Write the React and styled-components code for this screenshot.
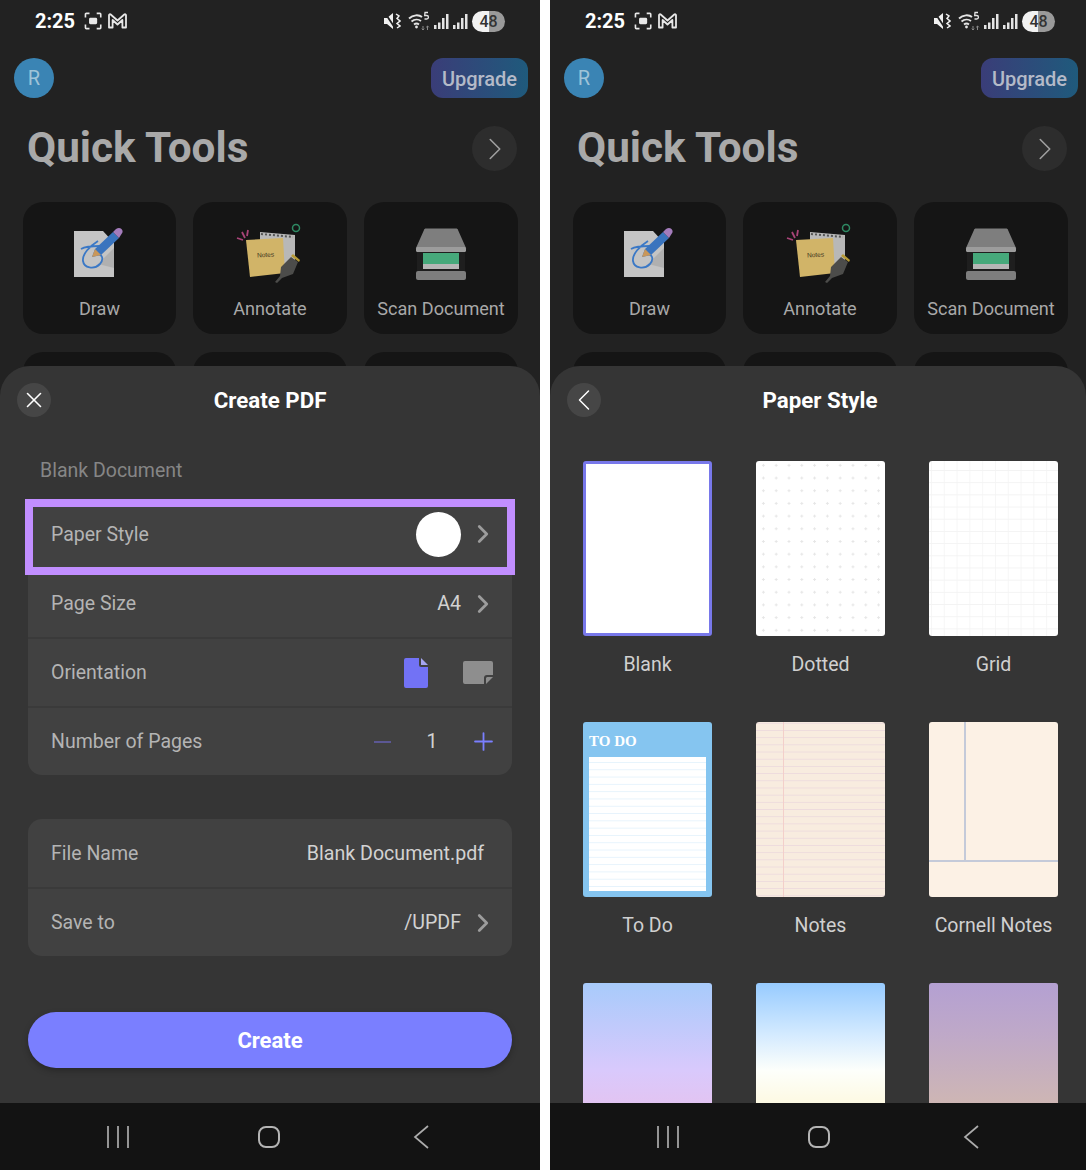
import React from 'react'
import styled, { createGlobalStyle } from 'styled-components'
import { ChevronLeft, ChevronRight, Plus, X } from 'lucide-react'

const GlobalStyle = createGlobalStyle`
    html, body {
        margin: 0;
        padding: 0;
        background: #ffffff;
    }
    * {
        box-sizing: border-box;
    }
`

const Page = styled.div`
    display: flex;
    gap: 10px;
    width: 1086px;
    height: 1170px;
    overflow: hidden;
    font-family: Roboto, "Liberation Sans", sans-serif;
`

const Phone = styled.div`
    display: flex;
    flex-direction: column;
    flex: none;
    width: ${p => p.$width}px;
    height: 1170px;
    overflow: hidden;
    background: #222222;
`

const Content = styled.div`
    position: relative;
    flex: none;
    width: 100%;
    height: 1103px;
    overflow: hidden;
`

const StatusBar = styled.div`
    display: flex;
    align-items: center;
    justify-content: space-between;
    width: 540px;
    height: 42px;
    padding: 0 35px;
`

const StatusGroup = styled.div`
    display: flex;
    align-items: center;
    gap: ${p => p.$gap || 5}px;
`

const Time = styled.span`
    margin-right: 5px;
    color: #ffffff;
    font-size: 20px;
    font-weight: 700;
`

const MuteIcon = styled.svg`
    margin-right: 3px;
`

const Battery = styled.div`
    width: 33px;
    height: 21px;
    border-radius: 11px;
    background: linear-gradient(90deg, #f2f2f2 50%, #9a9a9a 50%);
    color: #333333;
    font-size: 16px;
    font-weight: 500;
    line-height: 21px;
    text-align: center;
`

const TopBar = styled.div`
    display: flex;
    align-items: center;
    justify-content: space-between;
    width: 540px;
    margin-top: 16px;
    padding: 0 12px 0 14px;
`

const Avatar = styled.div`
    width: 40px;
    height: 40px;
    border-radius: 50%;
    background: #3a84b4;
    color: #9fc3d8;
    font-size: 20px;
    line-height: 40px;
    text-align: center;
`

const Upgrade = styled.div`
    width: 97px;
    height: 40px;
    border-radius: 12px;
    background: linear-gradient(90deg, #3a3d78, #1f5a7c);
    color: #b4bac8;
    font-size: 20px;
    font-weight: 500;
    line-height: 42px;
    text-align: center;
`

const TitleRow = styled.div`
    display: flex;
    align-items: center;
    justify-content: space-between;
    width: 540px;
    height: 45px;
    margin-top: 28px;
    padding: 0 23px 0 27px;
`

const BigTitle = styled.h1`
    margin: 0 0 2px;
    color: #a9a9a9;
    font-size: 42.3px;
    font-weight: 700;
`

const RoundButton = styled.div`
    display: flex;
    flex: none;
    align-items: center;
    justify-content: center;
    width: ${p => p.$size}px;
    height: ${p => p.$size}px;
    border-radius: 50%;
    background: ${p => p.$bg};
    color: ${p => p.$color};

    svg {
        flex: none;
    }
`

const ToolGrid = styled.div`
    display: grid;
    grid-template-columns: 153px 154px 154px;
    column-gap: 17px;
    row-gap: 18px;
    width: 540px;
    margin-top: 31px;
    padding-left: 23px;
`

const ToolCard = styled.div`
    display: flex;
    flex-direction: column;
    align-items: center;
    height: 132px;
    padding-top: 24px;
    border-radius: 20px;
    background: #151515;
`

const ToolIcon = styled.svg`
    flex: none;
    width: 60px;
    height: 60px;
    overflow: visible;
`

const ToolLabel = styled.span`
    margin-top: 12px;
    color: #a8a8a8;
    font-size: 18.1px;
    line-height: 21px;
    white-space: nowrap;
`

const Sheet = styled.div`
    position: absolute;
    left: 0;
    right: 0;
    bottom: 0;
    height: 737px;
    overflow: hidden;
    border-radius: 30px 30px 0 0;
    background: #353535;
`

const SheetHeader = styled.div`
    display: grid;
    grid-template-columns: 34px 1fr 34px;
    align-items: center;
    width: 506px;
    margin: 17px 0 0 17px;
`

const SheetTitle = styled.div`
    color: #ffffff;
    font-size: 22.3px;
    font-weight: 700;
    text-align: center;
`

const SectionLabel = styled.div`
    margin: 41px 0 0 40px;
    height: 26px;
    color: #868686;
    font-size: 19.5px;
    line-height: 26px;
`

const RowGroup = styled.div`
    width: 484px;
    margin: ${p => p.$top}px 0 0 28px;
    border-radius: 14px;
    background: #414141;
`

const Row = styled.div`
    position: relative;
    display: flex;
    align-items: center;
    justify-content: space-between;
    height: ${p => p.$first ? 68 : 69}px;
    padding: 0 14px 0 23px;
    border-top: ${p => p.$first ? 'none' : '2px solid #3a3a3a'};
`

const RowLabel = styled.span`
    color: #b4b4b4;
    font-size: 19.5px;
`

const RowValue = styled.span`
    color: #d2d2d2;
    font-size: 19.6px;
    margin-right: ${p => p.$flush ? 14 : 0}px;
`

const RowRight = styled.div`
    display: flex;
    align-items: center;
`

const Arrow = styled(ChevronRight)`
    margin-left: 7px;
    color: #9c9c9c;
`

const Highlight = styled.div`
    position: absolute;
    z-index: 1;
    top: -1px;
    left: -3px;
    right: -3px;
    bottom: -7px;
    border: 8px solid #c18eff;
    pointer-events: none;
`

const Swatch = styled.div`
    width: 45px;
    height: 45px;
    border-radius: 50%;
    background: #ffffff;
`

const OrientationIcons = styled.div`
    display: flex;
    align-items: center;
    gap: 35px;
    margin-right: 5px;
`

const Stepper = styled.div`
    display: flex;
    align-items: center;
`

const StepMinus = styled.div`
    width: 17px;
    height: 2px;
    background: #5b5794;
`

const StepCount = styled.span`
    width: 18px;
    margin: 0 28px 0 32px;
    color: #d2d2d2;
    font-size: 19.6px;
    text-align: center;
`

const CreateButton = styled.div`
    width: 484px;
    height: 56px;
    margin: 56px 0 0 28px;
    border-radius: 28px;
    background: #7a7fff;
    box-shadow: 0 3px 6px rgba(0, 0, 0, 0.25);
    color: #ffffff;
    font-size: 22px;
    font-weight: 700;
    line-height: 57px;
    text-align: center;
`

const PaperGrid = styled.div`
    display: grid;
    grid-template-columns: repeat(3, 129px);
    column-gap: 44px;
    row-gap: 45px;
    margin: 44px 0 0 33px;
`

const PaperItem = styled.div`
    display: flex;
    flex-direction: column;
    align-items: center;
`

const Thumb = styled.div`
    position: relative;
    width: 129px;
    height: 175px;
    overflow: hidden;
    border-radius: 3px;
    background: ${p => p.$bg || '#ffffff'};
    border: ${p => p.$selected ? '3px solid #7878ea' : 'none'};
`

const DottedThumb = styled(Thumb)`
    background-color: #ffffff;
    background-image: radial-gradient(circle, #e6e6e6 1px, transparent 1.3px);
    background-size: 12.8px 12.7px;
    background-position: 1px -2px;
`

const GridThumb = styled(Thumb)`
    background-color: #ffffff;
    background-image:
        linear-gradient(#f3f3f3 1px, transparent 1px),
        linear-gradient(90deg, #f6f6f6 1px, transparent 1px);
    background-size: 12.8px 12.2px;
    background-position: 2px 9px;
`

const TodoHead = styled.div`
    height: 35px;
    padding: 11px 0 0 6px;
    color: #ffffff;
    font-family: "Liberation Serif", serif;
    font-size: 15px;
    font-weight: 700;
    line-height: 17px;
`

const TodoSheet = styled.div`
    width: 117px;
    height: 134px;
    margin-left: 6px;
    background-color: #ffffff;
    background-image: linear-gradient(#e6f3fc 1.2px, transparent 1.2px);
    background-size: 100% 7.3px;
    background-position: 0 5px;
`

const NotesThumb = styled(Thumb)`
    background-color: #f8ecdf;
    background-image:
        linear-gradient(90deg, transparent 27px, #f3cfca 27px, #f3cfca 28.5px, transparent 28.5px),
        linear-gradient(#eddbdd 1.2px, transparent 1.2px);
    background-size: 100% 100%, 100% 7.2px;
    background-position: 0 0, 0 8px;
`

const CornellThumb = styled(Thumb)`
    background-color: #fcf1e5;
    background-image:
        linear-gradient(90deg, transparent 35px, #c4cad9 35px, #c4cad9 37px, transparent 37px),
        linear-gradient(transparent 138px, #c4cad9 138px, #c4cad9 140px, transparent 140px);
    background-size: 100% 139px, 100% 100%;
    background-repeat: no-repeat;
`

const PaperLabel = styled.span`
    margin-top: 17px;
    height: 24px;
    color: #d0d0d0;
    font-size: 19.5px;
    line-height: 24px;
    white-space: nowrap;
`

const NavBar = styled.div`
    display: grid;
    flex: none;
    grid-template-columns: 151px 155px auto;
    align-items: center;
    justify-content: start;
    width: 540px;
    height: 67px;
    padding-left: 107px;
    background: #131313;

    svg {
        display: block;
    }
`

const StatusIconsLeft = () => (
    <>
        <svg width="20" height="18" viewBox="0 0 22 20" fill="none" stroke="#e8e8e8" strokeWidth="1.8">
            <path d="M1.5 6V2.500a1 1 0 0 1 1-1H6M14 1.500h3.500a1 1 0 0 1 1 1V6M18.500 14v3.500a1 1 0 0 1-1 1H14M6 18.500H2.500a1 1 0 0 1-1-1V14" />
            <rect x="5.500" y="6.500" width="9" height="7" rx="1.500" fill="#e8e8e8" stroke="none" />
        </svg>
        <svg width="19" height="16" viewBox="0 0 19 16" fill="none" stroke="#e8e8e8" strokeWidth="1.8" strokeLinejoin="round">
            <path d="M1 14.500V2.200c0-.9 1-1.300 1.700-.7L9.500 7.500l6.800-6c.7-.6 1.700-.2 1.700.7v12.300h-3.600V7L9.500 11.500 4.600 7v7.500z" />
        </svg>
    </>
)

const StatusIconsRight = () => (
    <>
        <MuteIcon width="17" height="18" viewBox="0 0 17 18" fill="#f0f0f0">
            <path d="M0 6h3l6-5v16l-6-5H0z" />
            <path d="M1 1l10 15" stroke="#222" strokeWidth="1.800" />
            <path d="M12 2l3 2-2 2.500 3 2.500-3 2.500 3 2.500-3 2" fill="none" stroke="#f0f0f0" strokeWidth="1.500" />
        </MuteIcon>
        <svg width="22" height="20" viewBox="0 0 22 20" fill="none" stroke="#e4e4e4" strokeWidth="1.800">
            <path d="M1 7.500c4-4 10-4 13-1.500M3.500 10.500c3-2.500 7-2.500 9.500-.5M6 13.500c1.500-1.200 3.500-1.200 5 0" />
            <circle cx="8.500" cy="16" r="1.400" fill="#e4e4e4" stroke="none" />
            <path d="M15 15v4M13.700 17.700l1.300 1.300 1.300-1.300M19.500 19v-4M18.200 16.300l1.300-1.300 1.300 1.300" stroke="#8a8a8a" strokeWidth="1" />
            <path d="M20 1.500h-3l-.3 3h2a1.500 1.500 0 0 1 0 3.500H16.500" strokeWidth="1.300" />
        </svg>
        <SignalBars />
        <SignalBars />
    </>
)

const SignalBars = () => (
    <svg width="15" height="17" viewBox="0 0 15 17" fill="#e4e4e4">
        <rect x="0" y="12" width="2.500" height="4" />
        <rect x="4" y="9.500" width="2.500" height="6.500" />
        <rect x="8" y="5" width="2.500" height="11" />
        <rect x="12" y="1" width="2.500" height="15" />
    </svg>
)

const PencilPageIcon = () => (
    <ToolIcon viewBox="0 0 60 60">
        <path d="M4 5h29l11 12v34H4z" fill="#c4c4c4" />
        <path d="M44 22L28 38l16 4z" fill="#b0b0b0" />
        <path d="M11 23C16 20 22 20 30 20M28 15C20 20 12 28 13 35C14 42 24 44 30 38C34 33 33 28 25 27" fill="none" stroke="#3a78c6" strokeWidth="1.800" />
        <path d="M22 31l3-8L43 6l6 6-18 17z" fill="#3a74be" />
        <path d="M22 31l3-8 6 6z" fill="#c9975a" />
        <path d="M43 6l3-3c2-1.500 4-1.500 5.500 0s1.500 3.500 0 5l-2.500 4z" fill="#a47cbc" />
    </ToolIcon>
)

const NotesIcon = () => (
    <ToolIcon viewBox="0 0 60 60">
        <path d="M20 6l35 3v32H20z" fill="#b8b8b8" />
        <path d="M21 8l32 3" stroke="#565656" strokeWidth="2" strokeDasharray="2 2" />
        <path d="M6 14l37-2 2 35-35 4z" fill="#d1b468" />
        <text x="17" y="31" fontFamily="Liberation Sans, sans-serif" fontSize="6.500" fill="#3a3320" transform="rotate(-4 26 28)">Notes</text>
        <path d="M35 56l5-6 1-9 10-10 7 5-5 12-11 4-5 5z" fill="#4c4c4a" />
        <path d="M51 30l8 6 1-2-7-6z" fill="#b79b36" />
        <path d="M-3 12l6 2M2 6l3 6M8 4l-1 6" stroke="#a84478" strokeWidth="1.800" />
        <circle cx="56" cy="2" r="3.500" fill="none" stroke="#2e8a63" strokeWidth="1.500" />
    </ToolIcon>
)

const ScannerIcon = () => (
    <ToolIcon viewBox="0 0 60 60">
        <path d="M13 4c0-1 1-1.500 2-1.500h30c1 0 2 .5 2 1.500l8 18H5z" fill="#7e7e7e" />
        <rect x="5" y="21" width="50" height="5" rx="1.500" fill="#9c9c9c" />
        <path d="M6 26h48v22H6z" fill="#1e1e1e" />
        <rect x="12" y="27" width="36" height="11" fill="#46a97b" />
        <rect x="12" y="38" width="36" height="5" fill="#b6b6b6" />
        <rect x="5" y="45" width="50" height="9" rx="2" fill="#7e7e7e" />
    </ToolIcon>
)

const PortraitIcon = () => (
    <svg width="24" height="30" viewBox="0 0 24 30">
        <path d="M2 0h13v7a2 2 0 0 0 2 2h7v19a2 2 0 0 1-2 2H2a2 2 0 0 1-2-2V2a2 2 0 0 1 2-2z" fill="#7272f5" />
        <path d="M17 0l7 7h-7z" fill="#a6a6f0" />
    </svg>
)

const LandscapeIcon = () => (
    <svg width="30" height="23" viewBox="0 0 30 23">
        <path d="M2 0h26a2 2 0 0 1 2 2v12h-6a3 3 0 0 0-3 3v6H2a2 2 0 0 1-2-2V2a2 2 0 0 1 2-2z" fill="#8e8e8e" />
        <path d="M24 16h6l-7 7v-6z" fill="#8e8e8e" />
    </svg>
)

const NavIcons = () => (
    <>
        <svg width="22" height="22" viewBox="0 0 22 22" stroke="#acacac" strokeWidth="1.700">
            <path d="M1 0v22M11 0v22M21 0v22" />
        </svg>
        <svg width="22" height="22" viewBox="0 0 22 22" fill="none" stroke="#b4b4b4" strokeWidth="2">
            <rect x="1" y="1" width="20" height="20" rx="7" />
        </svg>
        <svg width="16" height="24" viewBox="0 0 16 24" fill="none" stroke="#acacac" strokeWidth="1.700">
            <path d="M15 1L2 12l13 11" />
        </svg>
    </>
)

const tools = [
    { label: 'Draw', Icon: PencilPageIcon },
    { label: 'Annotate', Icon: NotesIcon },
    { label: 'Scan Document', Icon: ScannerIcon },
]

const HomeScreen = () => (
    <>
        <StatusBar>
            <StatusGroup $gap={4}>
                <Time>2:25</Time>
                <StatusIconsLeft />
            </StatusGroup>
            <StatusGroup $gap={4}>
                <StatusIconsRight />
                <Battery>48</Battery>
            </StatusGroup>
        </StatusBar>
        <TopBar>
            <Avatar>R</Avatar>
            <Upgrade>Upgrade</Upgrade>
        </TopBar>
        <TitleRow>
            <BigTitle>Quick Tools</BigTitle>
            <RoundButton $size={45} $bg="#2d2d2d" $color="#a0a0a0">
                <ChevronRight size={38} strokeWidth={1} />
            </RoundButton>
        </TitleRow>
        <ToolGrid>
            {tools.map(({ label, Icon }) => (
                <ToolCard key={label}>
                    <Icon />
                    <ToolLabel>{label}</ToolLabel>
                </ToolCard>
            ))}
            <ToolCard />
            <ToolCard />
            <ToolCard />
        </ToolGrid>
    </>
)

const CreatePdfSheet = () => (
    <Sheet>
        <SheetHeader>
            <RoundButton $size={34} $bg="#464646" $color="#ffffff">
                <X size={26} strokeWidth={1.5} />
            </RoundButton>
            <SheetTitle>Create PDF</SheetTitle>
        </SheetHeader>
        <SectionLabel>Blank Document</SectionLabel>
        <RowGroup $top={16}>
            <Row $first>
                <RowLabel>Paper Style</RowLabel>
                <RowRight>
                    <Swatch />
                    <Arrow size={30} strokeWidth={2.2} />
                </RowRight>
                <Highlight />
            </Row>
            <Row>
                <RowLabel>Page Size</RowLabel>
                <RowRight>
                    <RowValue>A4</RowValue>
                    <Arrow size={30} strokeWidth={2.2} />
                </RowRight>
            </Row>
            <Row>
                <RowLabel>Orientation</RowLabel>
                <OrientationIcons>
                    <PortraitIcon />
                    <LandscapeIcon />
                </OrientationIcons>
            </Row>
            <Row>
                <RowLabel>Number of Pages</RowLabel>
                <Stepper>
                    <StepMinus />
                    <StepCount>1</StepCount>
                    <Plus size={29} color="#7a7fff" strokeWidth={1.5} />
                </Stepper>
            </Row>
        </RowGroup>
        <RowGroup $top={44}>
            <Row $first>
                <RowLabel>File Name</RowLabel>
                <RowValue $flush>Blank Document.pdf</RowValue>
            </Row>
            <Row>
                <RowLabel>Save to</RowLabel>
                <RowRight>
                    <RowValue>/UPDF</RowValue>
                    <Arrow size={30} strokeWidth={2.2} />
                </RowRight>
            </Row>
        </RowGroup>
        <CreateButton>Create</CreateButton>
    </Sheet>
)

const PaperStyleSheet = () => (
    <Sheet>
        <SheetHeader>
            <RoundButton $size={34} $bg="#464646" $color="#ffffff">
                <ChevronLeft size={36} strokeWidth={1} />
            </RoundButton>
            <SheetTitle>Paper Style</SheetTitle>
        </SheetHeader>
        <PaperGrid>
            <PaperItem>
                <Thumb $selected />
                <PaperLabel>Blank</PaperLabel>
            </PaperItem>
            <PaperItem>
                <DottedThumb />
                <PaperLabel>Dotted</PaperLabel>
            </PaperItem>
            <PaperItem>
                <GridThumb />
                <PaperLabel>Grid</PaperLabel>
            </PaperItem>
            <PaperItem>
                <Thumb $bg="#85c5f0">
                    <TodoHead>TO DO</TodoHead>
                    <TodoSheet />
                </Thumb>
                <PaperLabel>To Do</PaperLabel>
            </PaperItem>
            <PaperItem>
                <NotesThumb />
                <PaperLabel>Notes</PaperLabel>
            </PaperItem>
            <PaperItem>
                <CornellThumb />
                <PaperLabel>Cornell Notes</PaperLabel>
            </PaperItem>
            <PaperItem>
                <Thumb $bg="linear-gradient(#a8cbfb, #d9c9fc 50%, #e2c4f2 69%)" />
            </PaperItem>
            <PaperItem>
                <Thumb $bg="linear-gradient(#97cbff, #d5ebff 30%, #fdfffb 50%, #fdf9e2 69%)" />
            </PaperItem>
            <PaperItem>
                <Thumb $bg="linear-gradient(#b4a0d2, #bfa9c8 30%, #ceb6b4 69%)" />
            </PaperItem>
        </PaperGrid>
    </Sheet>
)

const App = () => (
    <Page>
        <GlobalStyle />
        <Phone $width={540}>
            <Content>
                <HomeScreen />
                <CreatePdfSheet />
            </Content>
            <NavBar>
                <NavIcons />
            </NavBar>
        </Phone>
        <Phone $width={536}>
            <Content>
                <HomeScreen />
                <PaperStyleSheet />
            </Content>
            <NavBar>
                <NavIcons />
            </NavBar>
        </Phone>
    </Page>
)

export default App
